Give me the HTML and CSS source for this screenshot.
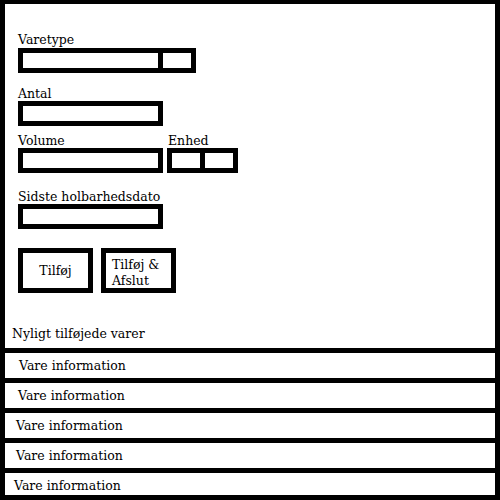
FILE: index.html
```html
<!DOCTYPE html>
<html lang="da">
<head>
    <meta charset="UTF-8">
    <meta name="viewport" content="width=device-width, initial-scale=1.0">
    <title>Tilføj varer</title>
    <link rel="stylesheet" href="styles.css">
</head>
<body>
    <div class="page">
        <form class="item-form">
            <div class="field field-type">
                <label>Varetype</label>
                <div class="combo">
                    <input type="text" class="box box-wide">
                    <span class="box-tail"></span>
                </div>
            </div>

            <div class="field field-amount">
                <label>Antal</label>
                <input type="text" class="box box-wide">
            </div>

            <div class="field-row">
                <div class="field">
                    <label>Volume</label>
                    <input type="text" class="box box-wide">
                </div>
                <div class="field">
                    <label class="label-unit">Enhed</label>
                    <div class="combo">
                        <input type="text" class="box box-unit">
                        <span class="box-tail"></span>
                    </div>
                </div>
            </div>

            <div class="field field-date">
                <label>Sidste holbarhedsdato</label>
                <input type="text" class="box box-wide">
            </div>

            <div class="actions">
                <button type="button" class="btn">Tilføj</button>
                <button type="button" class="btn btn-finish">Tilføj &amp; Afslut</button>
            </div>
        </form>

        <h2 class="recent-title">Nyligt tilføjede varer</h2>
        <ul class="recent-list">
            <li>Vare information</li>
            <li>Vare information</li>
            <li>Vare information</li>
            <li>Vare information</li>
            <li>Vare information</li>
        </ul>
    </div>
</body>
</html>
```

FILE: styles.css
```css
* {
    margin: 0;
    padding: 0;
    box-sizing: border-box;
}

body {
    font-family: "DejaVu Serif", serif;
    font-size: 12.5px;
    color: #000;
    background: #fff;
}

.page {
    width: 500px;
    height: 500px;
    border: 5px solid #000;
    border-top-width: 4px;
    overflow: hidden;
}

.item-form {
    padding: 29px 0 0 13px;
}

.field label {
    display: block;
    line-height: 14px;
}

.field-type label {
    margin-bottom: 1px;
}

.field-amount {
    margin-top: 14px;
}

.field-row {
    display: flex;
    gap: 4px;
    margin-top: 8px;
}

.label-unit {
    padding-left: 1px;
}

.field-date {
    margin-top: 17px;
}

.combo {
    display: flex;
}

.box {
    display: block;
    height: 25px;
    border: 5px solid #000;
    background: #fff;
    outline: none;
    font: inherit;
}

.box-wide {
    width: 145px;
}

.box-unit {
    width: 38px;
}

.box-tail {
    display: block;
    width: 33px;
    height: 25px;
    border: 5px solid #000;
    border-left: 0;
}

.actions {
    display: flex;
    gap: 8px;
    margin-top: 19px;
}

.btn {
    width: 75px;
    height: 45px;
    border: 5px solid #000;
    background: #fff;
    color: #000;
    font: inherit;
    line-height: 16px;
}

.btn-finish {
    text-align: left;
    padding: 4px 0 0 6px;
}

.recent-title {
    font-size: 12.5px;
    font-weight: normal;
    line-height: 14px;
    margin-top: 34px;
    padding-left: 7px;
}

.recent-list {
    list-style: none;
    margin-top: 7px;
}

.recent-list li {
    height: 30px;
    border-top: 5px solid #000;
    line-height: 25px;
    padding-left: 14px;
}

.recent-list li:nth-child(2) {
    padding-left: 13px;
}

.recent-list li:nth-child(3),
.recent-list li:nth-child(4) {
    padding-left: 11px;
}

.recent-list li:nth-child(5) {
    padding-left: 9px;
}
```
